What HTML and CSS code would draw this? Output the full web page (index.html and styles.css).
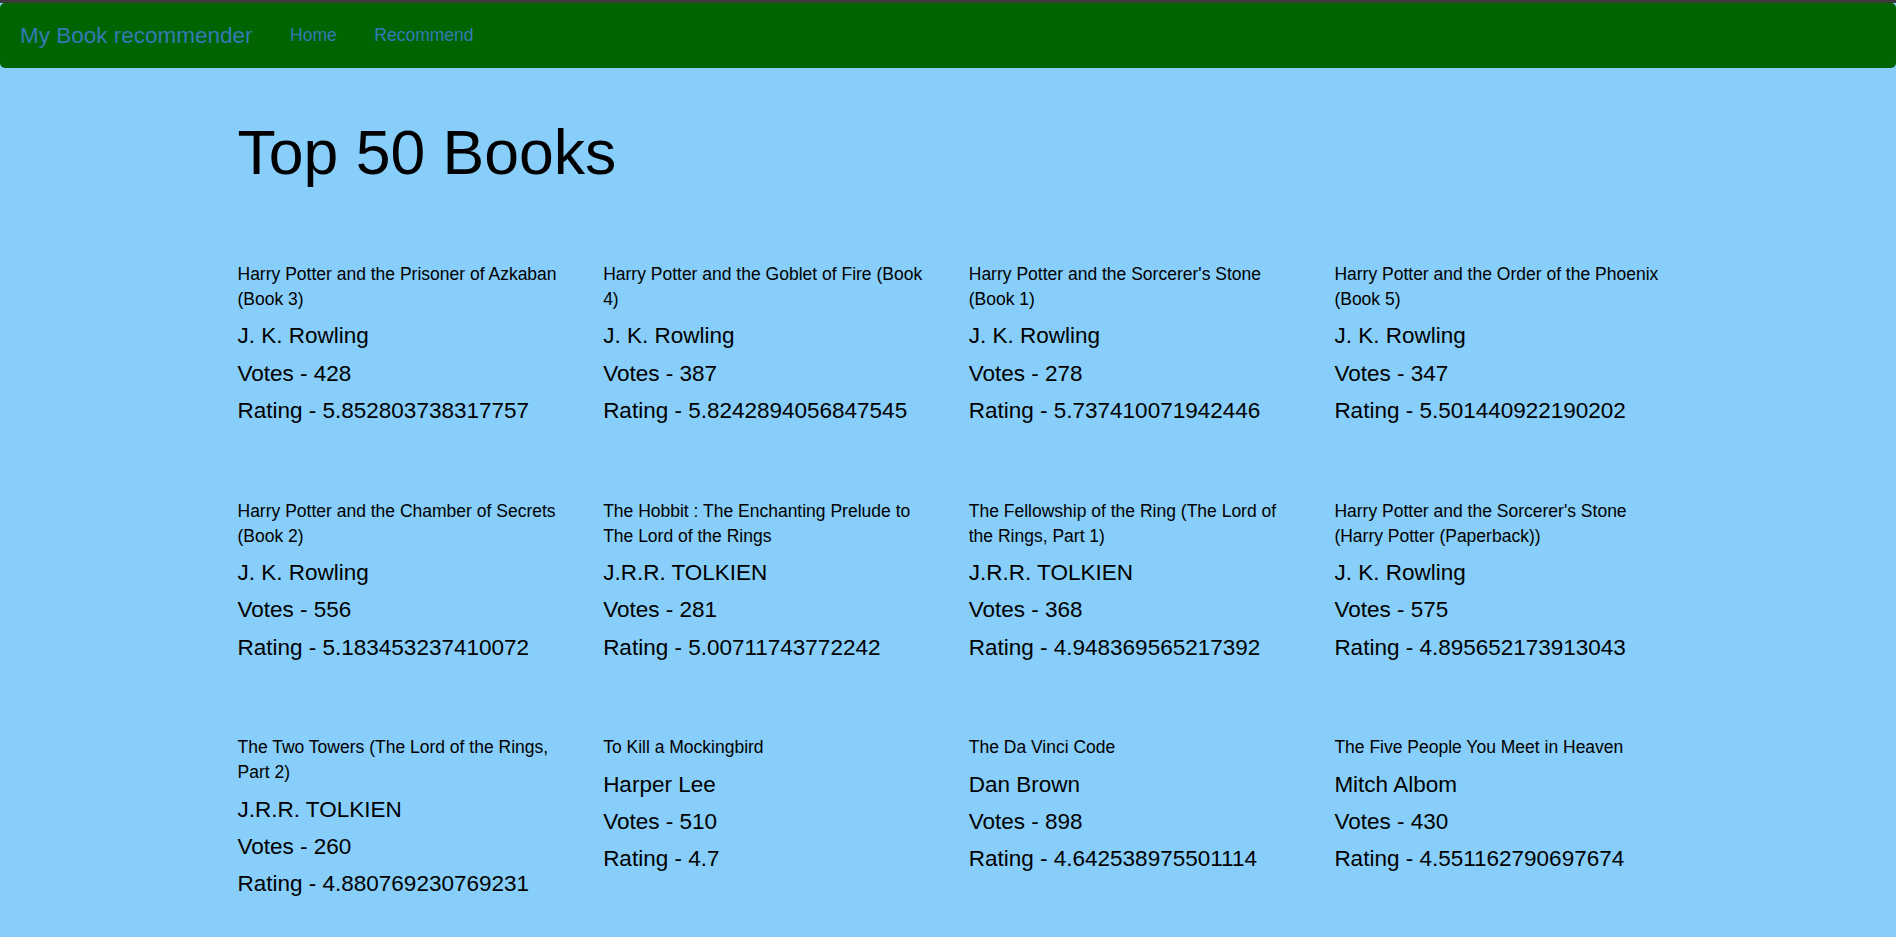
FILE: index.html
```html
<!DOCTYPE html>
<html lang="en">
<head>
<meta charset="utf-8">
<title>My Book recommender</title>
<link rel="stylesheet" href="styles.css">
</head>
<body>
<div class="topstrip"></div>
<nav class="navbar">
  <a class="brand" href="#">My Book recommender</a>
  <ul class="nav">
    <li><a href="#">Home</a></li>
    <li><a href="#">Recommend</a></li>
  </ul>
</nav>
<div class="container">
  <h1 class="page-title">Top 50 Books</h1>
  <div class="books">
    <div class="book">
      <p class="book-title">Harry Potter and the Prisoner of Azkaban (Book 3)</p>
      <h4 class="book-line">J. K. Rowling</h4>
      <h4 class="book-line">Votes - 428</h4>
      <h4 class="book-line">Rating - 5.852803738317757</h4>
    </div>
    <div class="book">
      <p class="book-title">Harry Potter and the Goblet of Fire (Book 4)</p>
      <h4 class="book-line">J. K. Rowling</h4>
      <h4 class="book-line">Votes - 387</h4>
      <h4 class="book-line">Rating - 5.8242894056847545</h4>
    </div>
    <div class="book">
      <p class="book-title">Harry Potter and the Sorcerer's Stone (Book 1)</p>
      <h4 class="book-line">J. K. Rowling</h4>
      <h4 class="book-line">Votes - 278</h4>
      <h4 class="book-line">Rating - 5.737410071942446</h4>
    </div>
    <div class="book">
      <p class="book-title">Harry Potter and the Order of the Phoenix (Book 5)</p>
      <h4 class="book-line">J. K. Rowling</h4>
      <h4 class="book-line">Votes - 347</h4>
      <h4 class="book-line">Rating - 5.501440922190202</h4>
    </div>
    <div class="book">
      <p class="book-title">Harry Potter and the Chamber of Secrets (Book 2)</p>
      <h4 class="book-line">J. K. Rowling</h4>
      <h4 class="book-line">Votes - 556</h4>
      <h4 class="book-line">Rating - 5.183453237410072</h4>
    </div>
    <div class="book">
      <p class="book-title">The Hobbit : The Enchanting Prelude to The Lord of the Rings</p>
      <h4 class="book-line">J.R.R. TOLKIEN</h4>
      <h4 class="book-line">Votes - 281</h4>
      <h4 class="book-line">Rating - 5.00711743772242</h4>
    </div>
    <div class="book">
      <p class="book-title">The Fellowship of the Ring (The Lord of the Rings, Part 1)</p>
      <h4 class="book-line">J.R.R. TOLKIEN</h4>
      <h4 class="book-line">Votes - 368</h4>
      <h4 class="book-line">Rating - 4.948369565217392</h4>
    </div>
    <div class="book">
      <p class="book-title">Harry Potter and the Sorcerer's Stone (Harry Potter (Paperback))</p>
      <h4 class="book-line">J. K. Rowling</h4>
      <h4 class="book-line">Votes - 575</h4>
      <h4 class="book-line">Rating - 4.895652173913043</h4>
    </div>
    <div class="book">
      <p class="book-title">The Two Towers (The Lord of the Rings, Part 2)</p>
      <h4 class="book-line">J.R.R. TOLKIEN</h4>
      <h4 class="book-line">Votes - 260</h4>
      <h4 class="book-line">Rating - 4.880769230769231</h4>
    </div>
    <div class="book">
      <p class="book-title">To Kill a Mockingbird</p>
      <h4 class="book-line">Harper Lee</h4>
      <h4 class="book-line">Votes - 510</h4>
      <h4 class="book-line">Rating - 4.7</h4>
    </div>
    <div class="book">
      <p class="book-title">The Da Vinci Code</p>
      <h4 class="book-line">Dan Brown</h4>
      <h4 class="book-line">Votes - 898</h4>
      <h4 class="book-line">Rating - 4.642538975501114</h4>
    </div>
    <div class="book">
      <p class="book-title">The Five People You Meet in Heaven</p>
      <h4 class="book-line">Mitch Albom</h4>
      <h4 class="book-line">Votes - 430</h4>
      <h4 class="book-line">Rating - 4.551162790697674</h4>
    </div>
  </div>
</div>
</body>
</html>
```
FILE: styles.css
```css
* {
  box-sizing: border-box;
}

html, body {
  margin: 0;
  padding: 0;
}

body {
  background: #87cefa;
  font-family: "Liberation Sans", Arial, Helvetica, sans-serif;
  font-size: 17.5px;
  line-height: 25px;
  color: #000;
}

.topstrip {
  height: 3px;
  background: #3c3c3c;
}

.navbar {
  display: flex;
  align-items: flex-start;
  height: 65px;
  padding-top: 1.25px;
  background: #006400;
  border-radius: 5px;
  margin-bottom: 25px;
}

.brand {
  display: block;
  padding: 18.75px;
  padding-left: 20px;
  font-size: 22.5px;
  line-height: 25px;
  color: #337ab7;
  text-decoration: none;
}

.nav {
  display: flex;
  list-style: none;
  margin: 0;
  padding: 0;
}

.nav a {
  display: block;
  padding: 18.75px;
  font-size: 17.5px;
  line-height: 25px;
  color: #337ab7;
  text-decoration: none;
}

.container {
  display: flow-root;
  width: 1462.5px;
  margin: 0 auto;
  padding: 0 16.75px 0 20.75px;
}

.page-title {
  font-size: 62.5px;
  font-weight: 400;
  line-height: 1.1;
  margin: 25px 0 12.5px;
}

.books {
  display: grid;
  grid-template-columns: repeat(4, 1fr);
  align-items: start;
  margin: 0 -18.75px;
}

.book {
  padding: 0 18.75px;
  margin-top: 62.5px;
}

.book-title {
  margin: 0 0 12.5px;
  font-size: 17.5px;
  line-height: 25px;
}

.book-line {
  margin: 12.5px 0;
  font-size: 22.5px;
  font-weight: 400;
  line-height: 1.1;
}
```
